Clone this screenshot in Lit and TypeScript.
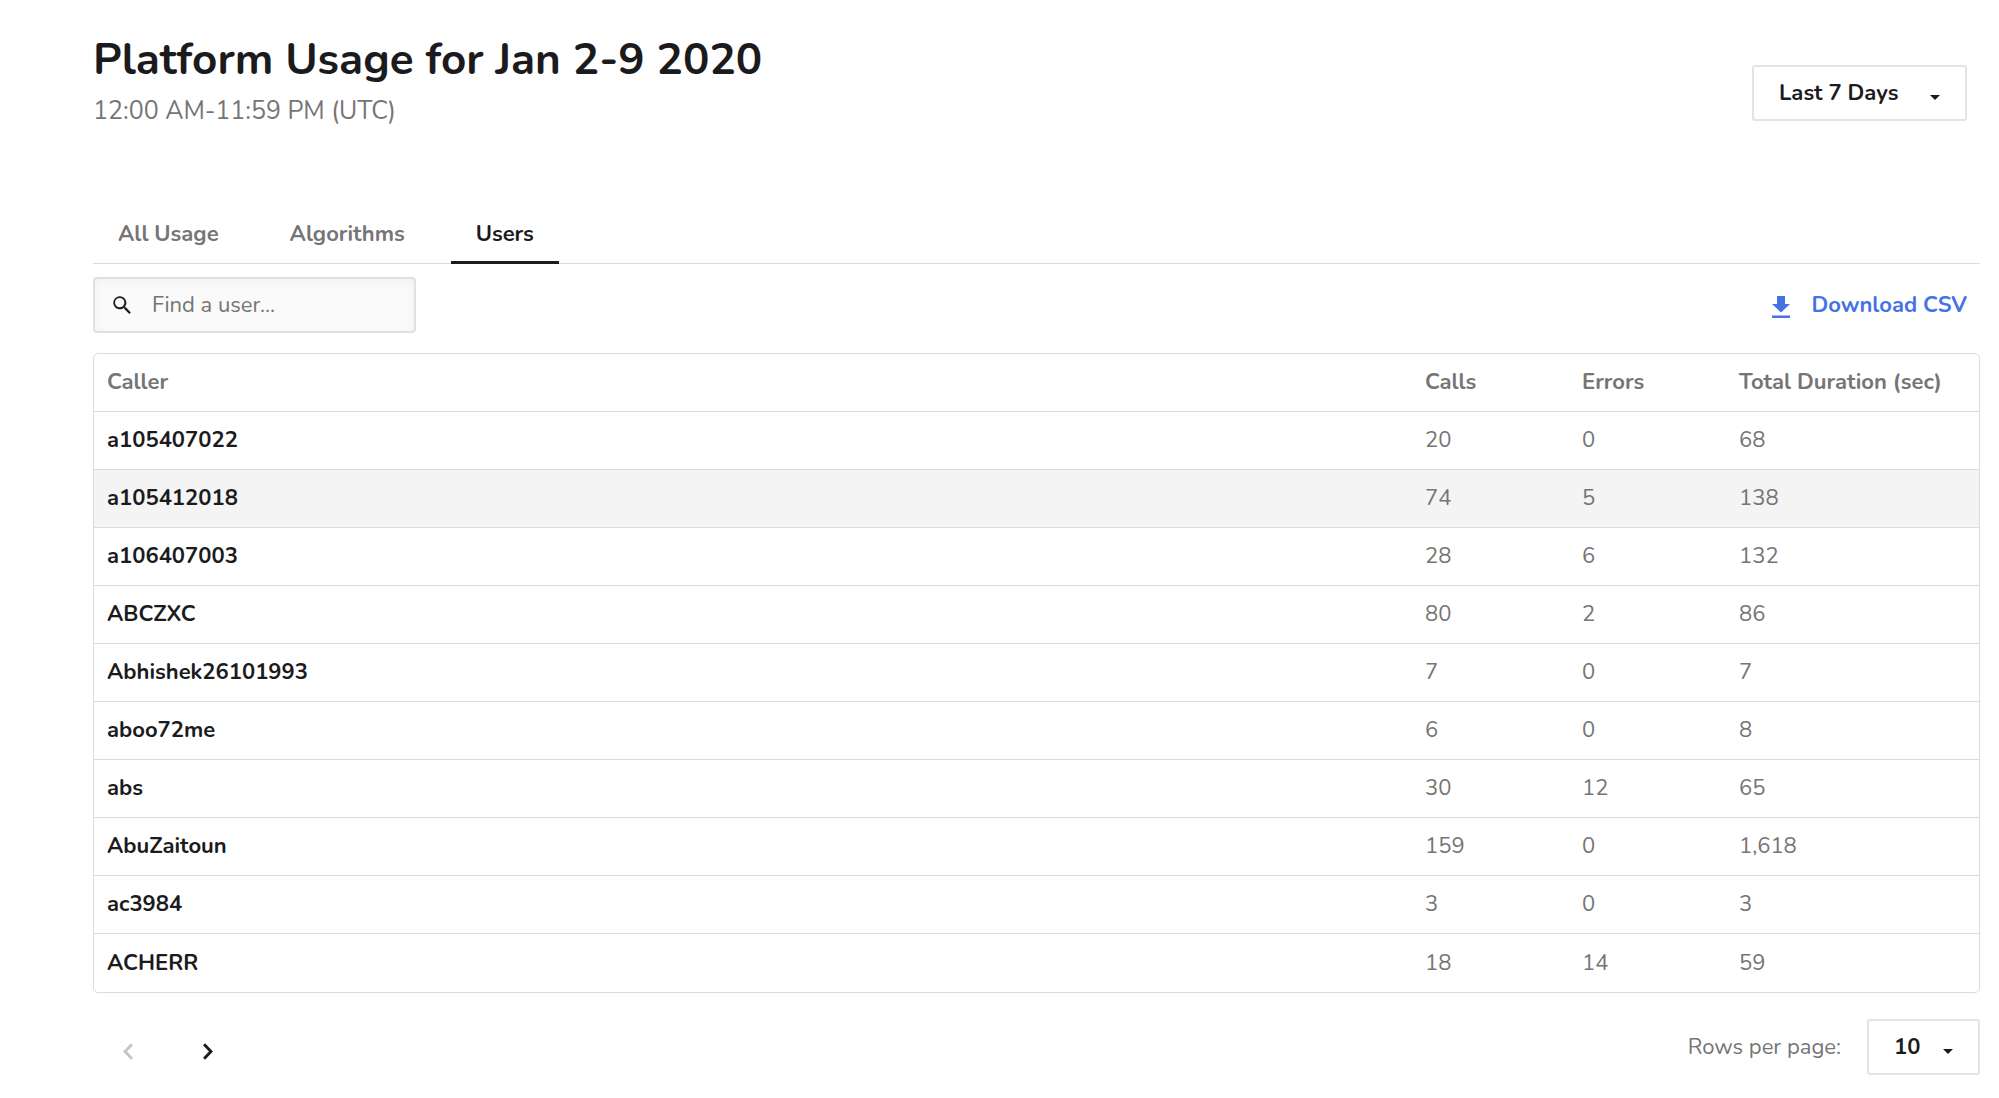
import { LitElement, css, html, svg } from "lit";
import { customElement, property, state } from "lit/decorators.js";
import { classMap } from "lit/directives/class-map.js";

interface Caller {
  name: string;
  calls: number;
  errors: number;
  duration: number;
}

const CALLERS: Caller[] = [
  { name: "a105407022", calls: 20, errors: 0, duration: 68 },
  { name: "a105412018", calls: 74, errors: 5, duration: 138 },
  { name: "a106407003", calls: 28, errors: 6, duration: 132 },
  { name: "ABCZXC", calls: 80, errors: 2, duration: 86 },
  { name: "Abhishek26101993", calls: 7, errors: 0, duration: 7 },
  { name: "aboo72me", calls: 6, errors: 0, duration: 8 },
  { name: "abs", calls: 30, errors: 12, duration: 65 },
  { name: "AbuZaitoun", calls: 159, errors: 0, duration: 1618 },
  { name: "ac3984", calls: 3, errors: 0, duration: 3 },
  { name: "ACHERR", calls: 18, errors: 14, duration: 59 },
];

const TABS = ["All Usage", "Algorithms", "Users"];

const searchIcon = svg`<path fill-rule="evenodd" d="M12.900 11.300h-.8l-.3-.3a6.500 6.500 0 1 0-.8.8l.3.3v.8l5 5 1.500-1.500-4.900-5.100zm-6.200 0a4.700 4.700 0 1 1 0-9.400 4.700 4.700 0 0 1 0 9.400z"/>`;
const downloadIcon = svg`<path d="M5 0h8v8h5l-9 8.500L0 8h5zM0 19.500h18V22H0z"/>`;

@customElement("usage-select")
export class UsageSelect extends LitElement {
  @property() name = "";
  @property() label = "";
  @property({ attribute: false }) options: string[] = [];

  static styles = css`
    :host {
      display: block;
    }
    .box {
      display: grid;
      align-items: center;
    }
    .control {
      grid-area: 1 / 1;
      box-sizing: border-box;
      height: 56px;
      padding: 0 56px 0 25px;
      border: 2px solid #e4e4e4;
      border-radius: 3px;
      background: #fff;
      color: #1b1b1d;
      font: inherit;
      font-weight: 700;
      appearance: none;
      cursor: pointer;
    }
    .caret {
      grid-area: 1 / 1;
      justify-self: end;
      width: 10px;
      height: 5px;
      margin: 8px 27px 0 0;
      fill: #1b1b1d;
      pointer-events: none;
    }
  `;

  render() {
    return html`<div class="box">
      <select class="control" name=${this.name} aria-label=${this.label}>
        ${this.options.map((o) => html`<option>${o}</option>`)}
      </select>
      <svg class="caret" viewBox="0 0 10 5" aria-hidden="true"><path d="M0 0h10L5 5z" /></svg>
    </div>`;
  }
}

@customElement("usage-table")
export class UsageTable extends LitElement {
  @property({ attribute: false }) rows: Caller[] = [];

  static styles = css`
    :host {
      display: block;
      border: 1px solid #dcdcdc;
      border-radius: 5px;
      overflow: hidden;
    }
    .table {
      width: 100%;
      table-layout: fixed;
      border-collapse: separate;
      border-spacing: 0;
    }
    .count {
      width: 157px;
    }
    .duration {
      width: 253px;
    }
    .cell {
      box-sizing: border-box;
      height: 58px;
      padding: 0 13px 1px;
      border-bottom: 1px solid #dcdcdc;
      color: #757575;
      font-weight: 400;
      text-align: left;
      white-space: nowrap;
    }
    .row:last-child .cell {
      border-bottom: 0;
    }
    .head {
      font-weight: 700;
    }
    .name {
      color: #1b1b1d;
      font-weight: 700;
    }
    .active {
      background: #f4f4f4;
    }
  `;

  render() {
    return html`<table class="table">
      <colgroup>
        <col />
        <col class="count" />
        <col class="count" />
        <col class="duration" />
      </colgroup>
      <thead>
        <tr>
          <th class="cell head" scope="col">Caller</th>
          <th class="cell head" scope="col">Calls</th>
          <th class="cell head" scope="col">Errors</th>
          <th class="cell head" scope="col">Total Duration (sec)</th>
        </tr>
      </thead>
      <tbody>
        ${this.rows.map(
          (r) => html`<tr class=${classMap({ row: true, active: r.name === "a105412018" })}>
            <th class="cell name" scope="row">${r.name}</th>
            <td class="cell">${r.calls}</td>
            <td class="cell">${r.errors}</td>
            <td class="cell">${r.duration.toLocaleString("en-US")}</td>
          </tr>`
        )}
      </tbody>
    </table>`;
  }
}

@customElement("app-root")
export class AppRoot extends LitElement {
  @state() private tab = "Users";
  @state() private query = "";

  static styles = css`
    :host {
      display: block;
      padding: 29px 19px 22px 93px;
      background: #fff;
      color: #1b1b1d;
      font-family: Nunito, "Open Sans", sans-serif;
      font-size: 22px;
      line-height: 30px;
    }
    .header {
      display: flex;
      justify-content: space-between;
      align-items: center;
      padding-right: 13px;
    }
    .title {
      margin: 0;
      font-size: 44px;
      line-height: 62px;
      font-weight: 700;
    }
    .period {
      margin: 0;
      color: #757575;
      font-size: 25px;
      line-height: 40px;
    }
    .range {
      min-width: 215px;
      margin-top: 26px;
    }
    .tabs {
      display: flex;
      gap: 21px;
      margin-top: 77px;
      border-bottom: 1px solid #dcdcdc;
    }
    .tab {
      height: 56px;
      margin-bottom: -1px;
      padding: 0 25px 1px;
      border: 0;
      border-bottom: 3px solid transparent;
      background: none;
      color: #757575;
      font: inherit;
      font-weight: 700;
      cursor: pointer;
    }
    .selected {
      border-bottom-color: #1b1b1d;
      color: #1b1b1d;
    }
    .tools {
      display: flex;
      justify-content: space-between;
      align-items: center;
      margin: 13px 0 20px;
      padding-right: 13px;
    }
    .search {
      display: flex;
      align-items: center;
      gap: 21px;
      box-sizing: border-box;
      width: 323px;
      height: 56px;
      padding: 0 18px;
      border: 2px solid #e0e0e0;
      border-radius: 4px;
      background: #fafafa;
      box-shadow: inset 0 2px 10px #f0f0f0;
    }
    .search-icon {
      flex: none;
      width: 18px;
      height: 18px;
      fill: #1b1b1d;
    }
    .field {
      flex: 1;
      min-width: 0;
      padding: 0 0 1px;
      border: 0;
      outline: 0;
      background: none;
      color: #1b1b1d;
      font: inherit;
    }
    .field::placeholder {
      color: #757575;
      opacity: 1;
    }
    .download {
      display: flex;
      align-items: center;
      gap: 21px;
      color: #4573e3;
      font-weight: 700;
      text-decoration: none;
    }
    .download-icon {
      width: 18px;
      height: 22px;
      margin-top: 4px;
      fill: currentColor;
    }
    .footer {
      display: flex;
      justify-content: space-between;
      align-items: center;
      margin-top: 26px;
    }
    .pager {
      display: flex;
      gap: 24px;
      padding: 8px 0 0 7px;
    }
    .page {
      display: grid;
      place-items: center;
      width: 56px;
      height: 40px;
      padding: 0;
      border: 0;
      background: none;
      color: #1b1b1d;
      cursor: pointer;
    }
    .page:disabled {
      color: #c6c6c6;
    }
    .chevron {
      width: 10px;
      height: 17px;
      fill: none;
      stroke: currentColor;
      stroke-width: 3;
    }
    .page-size {
      display: flex;
      align-items: center;
      gap: 26px;
      color: #757575;
    }
    .size {
      min-width: 113px;
    }
  `;

  private onSearch(e: Event) {
    this.query = (e.target as HTMLInputElement).value;
  }

  render() {
    const query = this.query.toLowerCase();
    const rows = CALLERS.filter((c) => c.name.toLowerCase().includes(query));
    return html`
      <header class="header">
        <div>
          <h1 class="title">Platform Usage for Jan 2-9 2020</h1>
          <p class="period">12:00 AM-11:59 PM (UTC)</p>
        </div>
        <usage-select
          class="range"
          name="range"
          label="Date range"
          .options=${["Last 7 Days", "Today"]}
        ></usage-select>
      </header>

      <div class="tabs" role="tablist">
        ${TABS.map(
          (t) => html`<button
            type="button"
            role="tab"
            class=${classMap({ tab: true, selected: t === this.tab })}
            aria-selected=${t === this.tab ? "true" : "false"}
            @click=${() => (this.tab = t)}
          >${t}</button>`
        )}
      </div>

      <div class="tools">
        <label class="search">
          <svg class="search-icon" viewBox="0 0 18 18" aria-hidden="true">${searchIcon}</svg>
          <input
            class="field"
            type="text"
            name="user"
            aria-label="Find a user"
            placeholder="Find a user..."
            .value=${this.query}
            @input=${this.onSearch}
          />
        </label>
        <a class="download" href="#csv" download>
          <svg class="download-icon" viewBox="0 0 18 22" aria-hidden="true">${downloadIcon}</svg>
          Download CSV
        </a>
      </div>

      <usage-table .rows=${rows}></usage-table>

      <footer class="footer">
        <nav class="pager" aria-label="Pages">
          <button class="page" type="button" disabled aria-label="Previous page">
            <svg class="chevron" viewBox="0 0 10 17" aria-hidden="true"><path d="M9 1.200 2 8.500l7 7.300" /></svg>
          </button>
          <button class="page" type="button" aria-label="Next page">
            <svg class="chevron" viewBox="0 0 10 17" aria-hidden="true"><path d="m1 1.200 7 7.300-7 7.300" /></svg>
          </button>
        </nav>
        <div class="page-size">
          <span>Rows per page:</span>
          <usage-select
            class="size"
            name="page-size"
            label="Rows per page"
            .options=${["10", "25"]}
          ></usage-select>
        </div>
      </footer>
    `;
  }
}
